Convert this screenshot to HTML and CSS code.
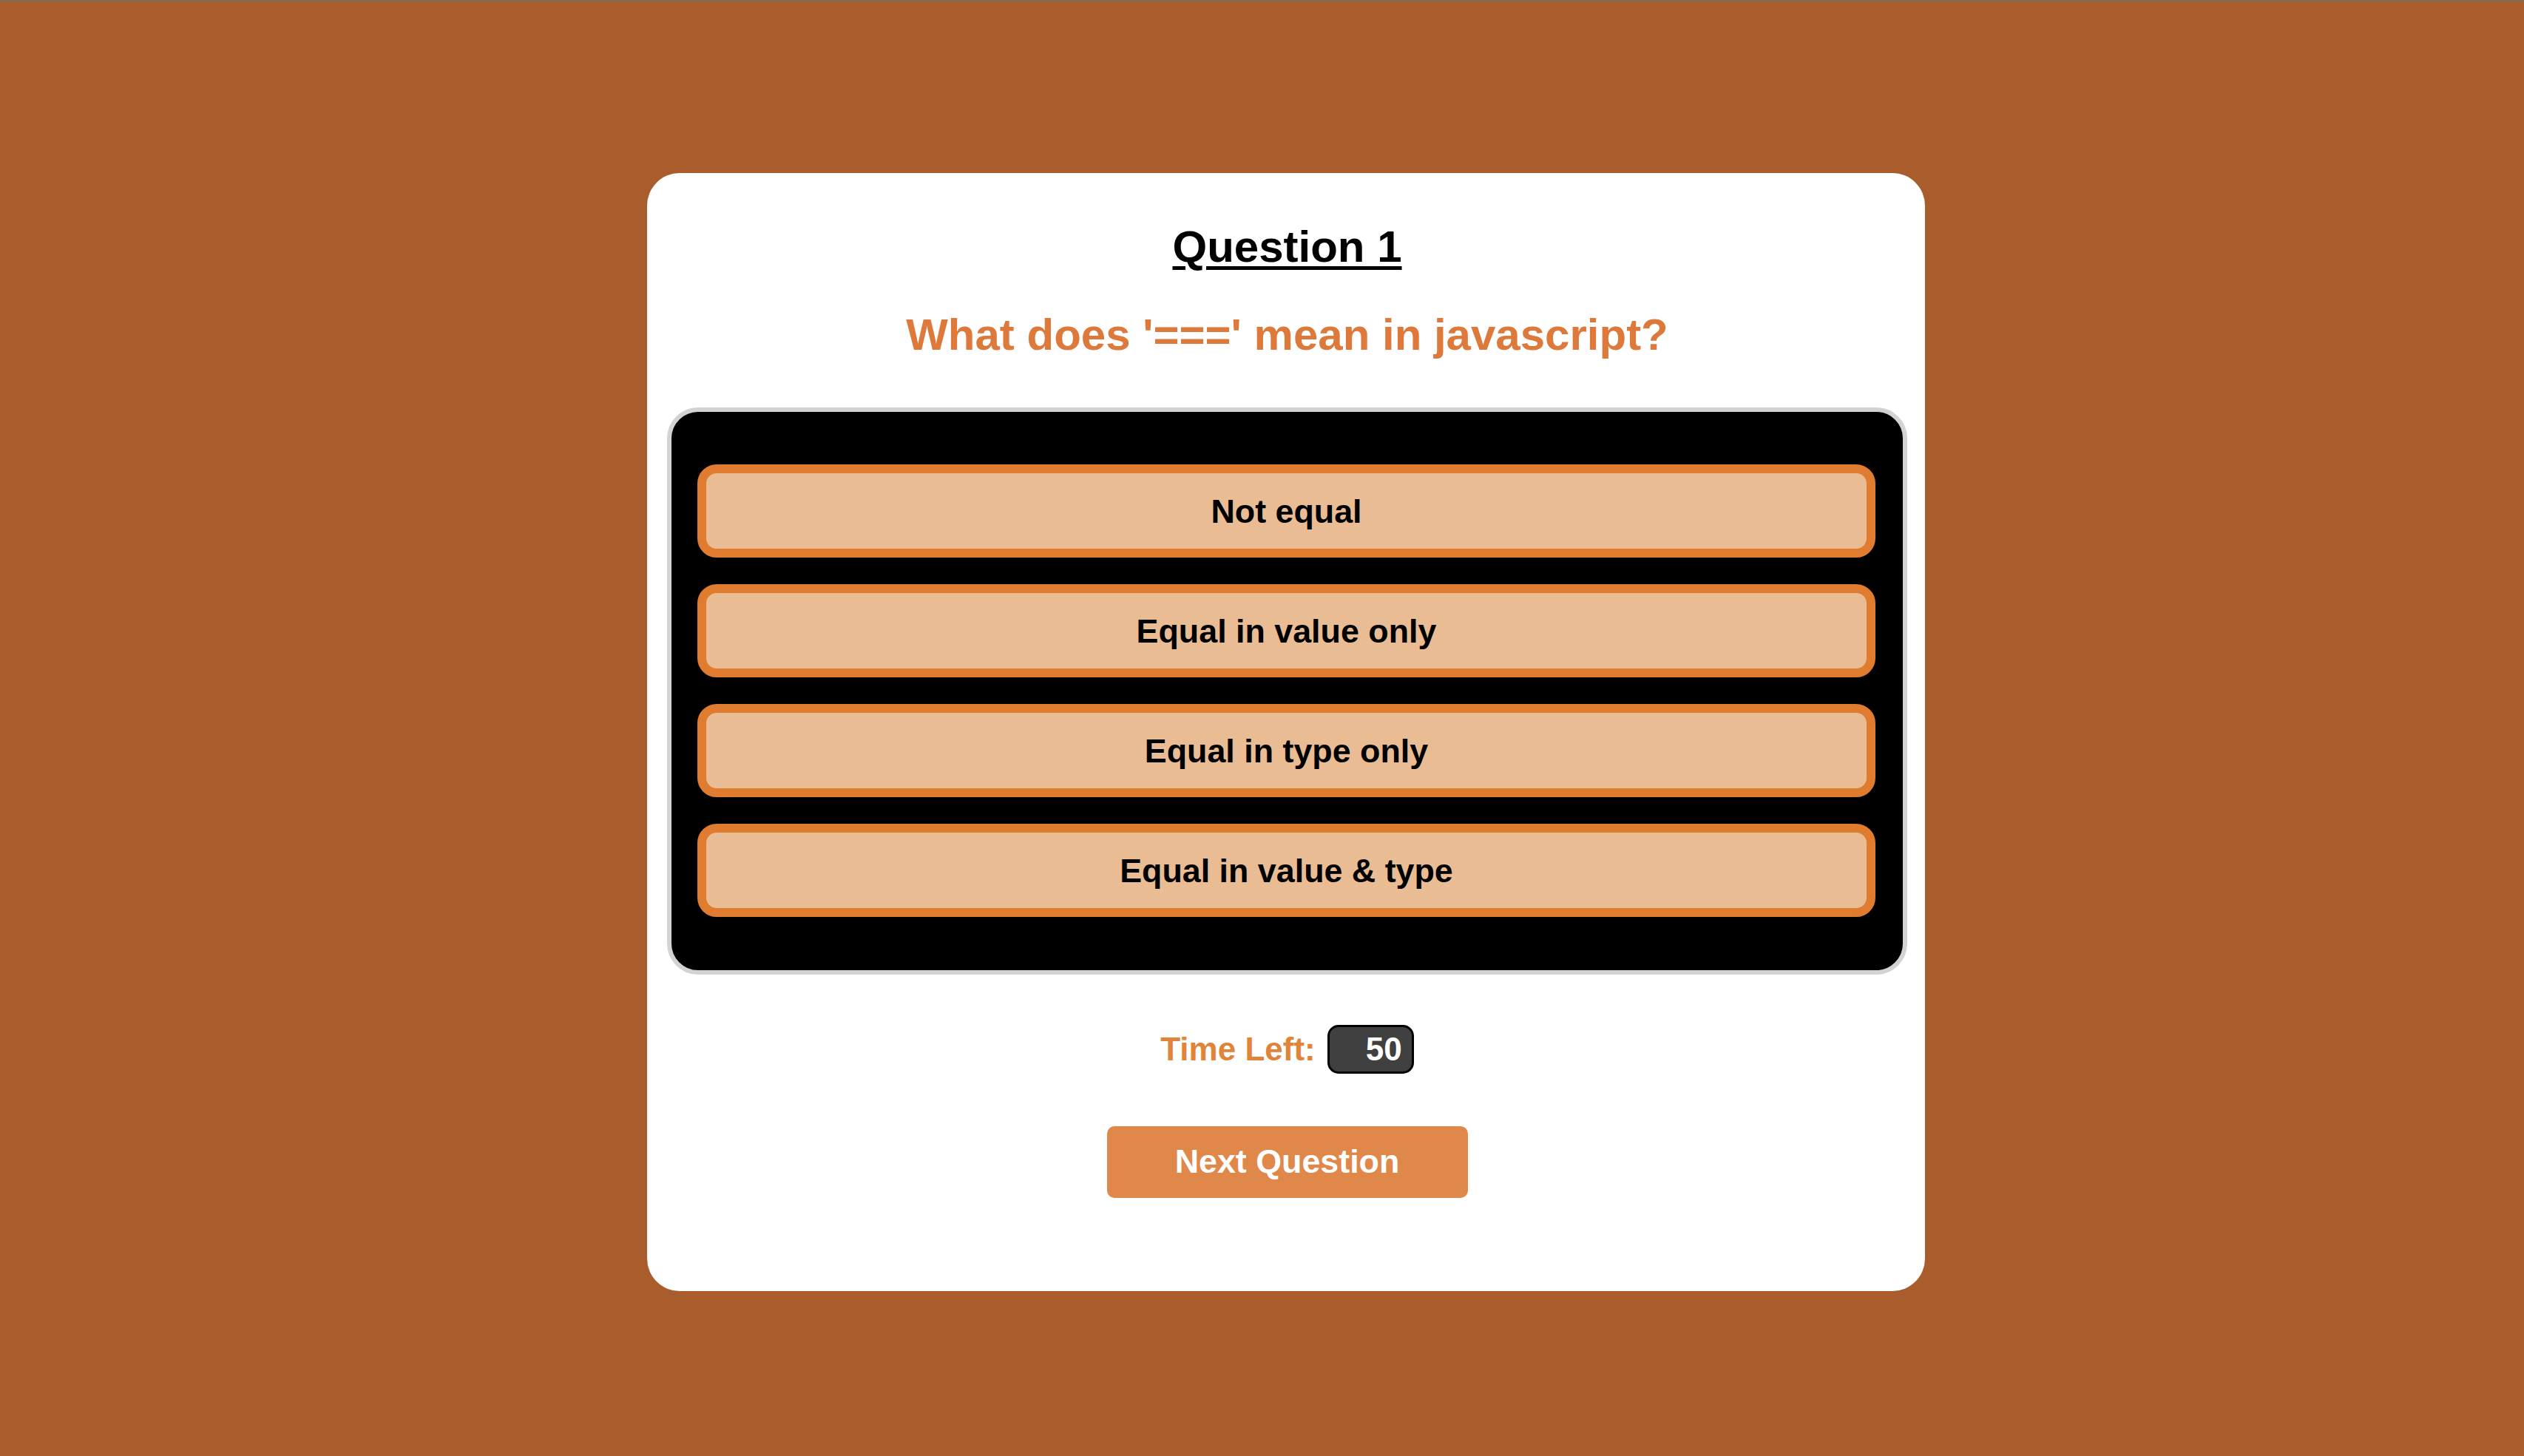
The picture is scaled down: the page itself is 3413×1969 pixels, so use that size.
FILE: index.html
```html
<!DOCTYPE html>
<html lang="en">
<head>
<meta charset="utf-8">
<title>Quiz</title>
<link rel="stylesheet" href="styles.css">
</head>
<body>
<div class="page">
  <main class="card">
    <h1 class="title">Question 1</h1>
    <h2 class="question">What does '===' mean in javascript?</h2>
    <div class="answers">
      <button class="option">Not equal</button>
      <button class="option">Equal in value only</button>
      <button class="option">Equal in type only</button>
      <button class="option">Equal in value &amp; type</button>
    </div>
    <div class="timer-row">
      <span class="timer-label">Time Left:</span>
      <span class="timer">50</span>
    </div>
    <button class="next">Next Question</button>
  </main>
</div>
</body>
</html>
```

FILE: styles.css
```css
html, body {
  margin: 0;
  padding: 0;
}
body {
  background: #a95c2c;
  border-top: 1px solid #527a80;
  min-height: 1968px;
  font-family: "Liberation Sans", Arial, sans-serif;
}
.page {
  display: flex;
  justify-content: center;
  padding: 233px 0 0 65px;
}
.card {
  box-sizing: border-box;
  width: 1728px;
  background: #ffffff;
  border-radius: 44px;
  padding: 65px 24px 126px 27px;
  display: flex;
  flex-direction: column;
  align-items: center;
}
.title {
  margin: 0;
  font-size: 60px;
  line-height: 69px;
  font-weight: bold;
  color: #000;
  text-decoration: underline;
  text-decoration-thickness: 5px;
  text-underline-offset: 6px;
}
.question {
  margin: 50px 0 0;
  font-size: 60px;
  line-height: 69px;
  font-weight: bold;
  color: #dd7a3b;
}
.answers {
  box-sizing: border-box;
  margin-top: 64px;
  width: 1677px;
  background: #000;
  border: 6px solid #d3d3d3;
  border-radius: 42px;
  padding: 71px 37px 72px 35px;
  display: flex;
  flex-direction: column;
  gap: 36px;
}
.option {
  box-sizing: border-box;
  height: 126px;
  width: 100%;
  background: #e9bc94;
  border: 12px solid #df7c30;
  border-radius: 26px;
  font-family: "Liberation Sans", Arial, sans-serif;
  font-size: 44.8px;
  font-weight: bold;
  color: #000;
  padding: 0;
  cursor: pointer;
}
.timer-row {
  margin-top: 68px;
  display: flex;
  align-items: center;
  gap: 16px;
}
.timer-label {
  font-size: 44px;
  font-weight: bold;
  color: #e0843a;
}
.timer {
  box-sizing: border-box;
  width: 117px;
  height: 66px;
  background: #404040;
  border: 3px solid #000;
  border-radius: 15px;
  color: #fff;
  font-size: 44px;
  font-weight: bold;
  display: flex;
  align-items: center;
  justify-content: flex-end;
  padding-right: 13px;
}
.next {
  margin-top: 71px;
  width: 488px;
  height: 97px;
  background: #e0874a;
  border: none;
  border-radius: 10px;
  color: #fff;
  font-family: "Liberation Sans", Arial, sans-serif;
  font-size: 44.8px;
  font-weight: bold;
  padding: 0 0 2px;
  cursor: pointer;
}
```
